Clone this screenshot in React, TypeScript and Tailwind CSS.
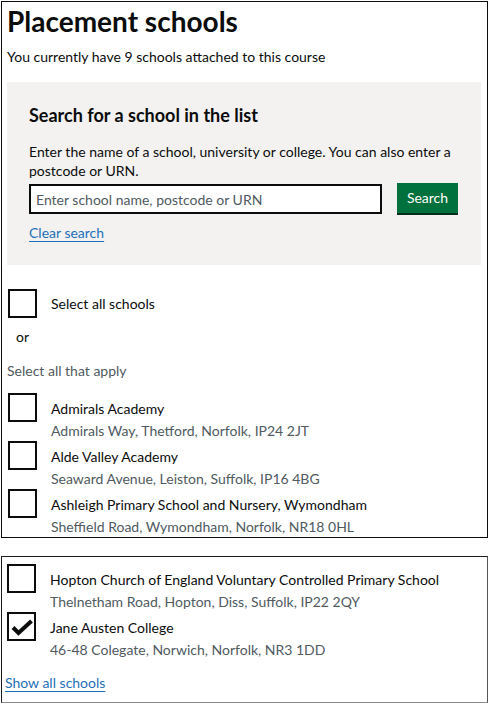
import React from 'react'

type School = { name: string; address: string; checked?: boolean }

const topSchools: School[] = [
  { name: 'Admirals Academy', address: 'Admirals Way, Thetford, Norfolk, IP24 2JT' },
  { name: 'Alde Valley Academy', address: 'Seaward Avenue, Leiston, Suffolk, IP16 4BG' },
  { name: 'Ashleigh Primary School and Nursery, Wymondham', address: 'Sheffield Road, Wymondham, Norfolk, NR18 0HL' },
]

const bottomSchools: School[] = [
  { name: 'Hopton Church of England Voluntary Controlled Primary School', address: 'Thelnetham Road, Hopton, Diss, Suffolk, IP22 2QY' },
  { name: 'Jane Austen College', address: '46-48 Colegate, Norwich, Norfolk, NR3 1DD', checked: true },
]

function Checkbox({ checked }: { checked?: boolean }) {
  return (
    <span className="flex h-[29px] w-[29px] shrink-0 items-center justify-center border-2 border-[#0b0c0c] bg-white">
      {checked && (
        <svg width="29" height="29" viewBox="0 0 29 29" className="-m-[2px]">
          <path d="M6 15.5 L11.5 21 L24.5 9" fill="none" stroke="#0b0c0c" strokeWidth="4" />
        </svg>
      )}
    </span>
  )
}

function SchoolRow({ school }: { school: School }) {
  return (
    <div className="flex h-[48px] gap-[14px]">
      <Checkbox checked={school.checked} />
      <div className="pt-[5px]">
        <div className="text-[14px] leading-[21px] text-[#0b0c0c]">{school.name}</div>
        <div className="text-[14px] leading-[23px] text-[#505a5f]">{school.address}</div>
      </div>
    </div>
  )
}

export default function App() {
  return (
    <div className="min-h-screen bg-white font-[family-name:Lato,sans-serif] text-[#0b0c0c]">
      <div className="ml-px mt-px h-[537px] w-[487px] border border-[#0b0c0c] pl-[5px] pr-[6px] pt-[4px]">
        <h1 className="text-[28px] font-bold leading-[30px]">Placement schools</h1>
        <p className="mt-[11px] text-[14px] leading-[20px]">You currently have 9 schools attached to this course</p>

        <div className="mt-[15px] h-[183px] bg-[#f3f2f1] px-[22px] pt-[22px]">
          <h2 className="text-[18px] font-bold leading-[22px]">Search for a school in the list</h2>
          <p className="mt-[16px] text-[14px] leading-[19px]">
            Enter the name of a school, university or college. You can also enter a postcode or URN.
          </p>
          <div className="mt-[4px] flex items-start gap-[15px]">
            <input
              className="h-[30px] w-[353px] border-2 border-[#0b0c0c] bg-white px-[5px] text-[14px] text-[#0b0c0c] outline-none placeholder:text-[#505a5f]"
              placeholder="Enter school name, postcode or URN"
            />
            <button className="h-[30px] w-[61px] -mt-px bg-[#00703c] pb-[2px] text-[14px] text-white shadow-[0_2px_0_#002d18]">
              Search
            </button>
          </div>
          <a href="#" className="mt-[9px] block text-[14px] leading-[20px] text-[#1d70b8] underline underline-offset-[3px]">
            Clear search
          </a>
        </div>

        <div className="ml-px mt-[24px] flex items-center gap-[14px]">
          <Checkbox />
          <span className="pt-px text-[14px] leading-[20px]">Select all schools</span>
        </div>
        <p className="ml-[9px] mt-[9px] text-[14px] leading-[20px]">or</p>
        <p className="mt-[14px] text-[14px] leading-[20px] text-[#505a5f]">Select all that apply</p>

        <div className="ml-px mt-[12px] flex flex-col">
          {topSchools.map(s => (
            <SchoolRow key={s.name} school={s} />
          ))}
        </div>
      </div>

      <div className="ml-px mt-[18px] h-[147px] w-[487px] border border-[#1b1b1b] border-b-[#8a8a8a] border-r-[#555] pl-[5px] pt-[7px]">
        <div className="flex flex-col">
          {bottomSchools.map(s => (
            <SchoolRow key={s.name} school={s} />
          ))}
        </div>
        <a href="#" className="-ml-[2px] mt-[13px] block text-[14px] leading-[20px] text-[#1d70b8] underline underline-offset-[3px]">
          Show all schools
        </a>
      </div>
    </div>
  )
}
